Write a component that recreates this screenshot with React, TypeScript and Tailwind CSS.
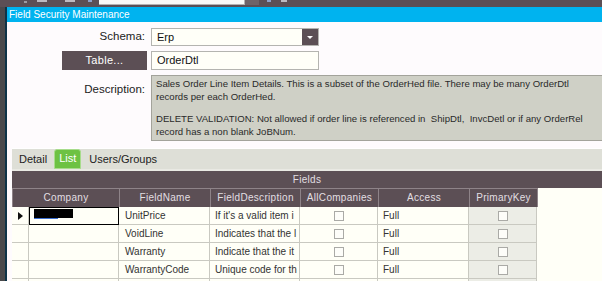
const columns = [
  { name: 'Company', w: 'w-[107px]' },
  { name: 'FieldName', w: 'w-[91px]' },
  { name: 'FieldDescription', w: 'w-[90px]' },
  { name: 'AllCompanies', w: 'w-[78px]' },
  { name: 'Access', w: 'w-[91px]' },
  { name: 'PrimaryKey', w: 'w-[68px]' },
];

// descriptions are clipped by the grid cell in the app
const rows = [
  { field: 'UnitPrice', desc: "If it's a valid item i" },
  { field: 'VoidLine', desc: 'Indicates that the l' },
  { field: 'Warranty', desc: 'Indicate that the it' },
  { field: 'WarrantyCode', desc: 'Unique code for th' },
  { field: '', desc: '' },
];

function Check() {
  return <span className="block w-[10px] h-[10px] border border-[#aaaaa6] bg-[#fdfdf9]" />;
}

function GridRow({ row, first }: { row: (typeof rows)[number]; first: boolean }) {
  return (
    <div className="flex h-[18px] shrink-0">
      <div className="w-[17px] border-r border-b border-[#c9c9c1] flex items-center justify-center">
        {first && (
          <svg width="5" height="8" viewBox="0 0 5 8">
            <path d="M0 0 L5 4 L0 8 Z" fill="#111" />
          </svg>
        )}
      </div>
      <div
        className={
          first
            ? 'w-[90px] border border-black relative'
            : 'w-[90px] border-r border-b border-[#c9c9c1]'
        }
      >
        {first && (
          <>
            <span className="absolute left-[4px] top-[1px] w-[39px] h-[9px] bg-black" />
            <span className="absolute left-[4px] top-[10px] w-[24px] h-[1px] bg-[#3a6fd0]" />
          </>
        )}
      </div>
      <div className="w-[91px] border-r border-b border-[#c9c9c1] pl-[6px] flex items-center overflow-hidden whitespace-nowrap">
        {row.field}
      </div>
      <div className="w-[90px] border-r border-b border-[#c9c9c1] pl-[5px] flex items-center overflow-hidden whitespace-nowrap">
        {row.desc}
      </div>
      <div className="w-[78px] border-r border-b border-[#c9c9c1] flex items-center justify-center">
        {row.field && <Check />}
      </div>
      <div className="w-[91px] border-r border-b border-[#c9c9c1] pl-[5px] flex items-center">
        {row.field && 'Full'}
      </div>
      <div className="w-[68px] border-r border-b border-[#c9c9c1] bg-[#ecede6] flex items-center justify-center">
        {row.field && <Check />}
      </div>
    </div>
  );
}

export default function App() {
  return (
    <div className="w-[602px] h-[281px] overflow-hidden flex flex-col bg-[#5c4f55] font-['Liberation_Sans',Arial,sans-serif]">
      {/* top toolbar remnant */}
      <div className="h-[7px] shrink-0 flex items-start">
        <span className="ml-[24px] mt-[1px] w-[3px] h-[2px] bg-[#9d9aa0]" />
        <span className="ml-[10px] w-[10px] h-[2px] bg-[#bdbac0]" />
        <span className="ml-[18px] w-[10px] h-[2px] bg-[#bdbac0]" />
        <span className="ml-[13px] w-[4px] h-[2px] bg-[#8da0c8]" />
        <span className="ml-[7px] w-[146px] h-[5px] bg-[#fbfaf8] border-b border-r border-[#b5b2b2]" />
        <span className="w-[14px] h-[5px] bg-[#6e6368]" />
        <span className="ml-[8px] w-[4px] h-[2px] bg-[#8da0c8]" />
        <span className="ml-[10px] w-[6px] h-[2px] bg-[#bdbac0]" />
      </div>
      <div className="flex flex-1 min-h-0">
        <div className="w-[5px] shrink-0 bg-[#4a4a4c]" />
        <div className="w-[2px] shrink-0 bg-[#0e3448]" />
        <div className="flex-1 flex flex-col bg-[#fefbfd] min-w-0 overflow-hidden">
          <div className="h-[15px] shrink-0 bg-[#00b3ef] text-white text-[10px] leading-[15px] pl-[2px]">
            Field Security Maintenance
          </div>

          {/* form */}
          <div className="flex items-center mt-[6px] h-[18px]">
            <div className="w-[138px] shrink-0 text-right text-[11.5px] text-[#222]">Schema:</div>
            <div className="ml-[6px] w-[168px] shrink-0 h-[18px] flex border border-[#b4b4b0] bg-[#fffff8]">
              <div className="flex-1 pl-[5px] text-[11px] leading-[16px] text-[#111]">Erp</div>
              <div className="w-[16px] bg-[#5c4f55] flex items-center justify-center">
                <svg width="6" height="3" viewBox="0 0 6 3">
                  <path d="M0 0 H6 L3 3 Z" fill="#fff" />
                </svg>
              </div>
            </div>
          </div>
          <div className="flex items-center mt-[5px] h-[19px]">
            <div className="ml-[55px] w-[85px] shrink-0 h-[19px] bg-[#5c4f55] text-white text-[11px] leading-[19px] text-center tracking-[0.3px]">
              Table...
            </div>
            <div className="ml-[4px] w-[168px] shrink-0 h-[19px] border border-[#b4b4b0] bg-[#fffff8] pl-[5px] text-[11px] leading-[17px] text-[#111]">
              OrderDtl
            </div>
          </div>
          <div className="flex mt-[5px]">
            <div className="w-[138px] shrink-0 text-right text-[11.5px] text-[#222] pt-[6px]">Description:</div>
            <div className="ml-[6px] w-[470px] shrink-0 h-[66px] bg-[#cfd0c6] border border-[#a3a39b] pl-[4px] pt-[2px] text-[9.6px] leading-[12.5px] text-[#2a2a2a] whitespace-nowrap">
              <div>Sales Order Line Item Details. This is a subset of the OrderHed file. There may be many OrderDtl</div>
              <div>records per each OrderHed.</div>
              <div className="mt-[10px]">
                DELETE VALIDATION: Not allowed if order line is referenced in&nbsp; ShipDtl,&nbsp; InvcDetl or if any OrderRel
              </div>
              <div>record has a non blank JoBNum.</div>
            </div>
          </div>

          {/* tabs */}
          <div className="ml-[5px] mt-[7px] h-[21px] shrink-0 bg-[#dedfd7] border-t border-white flex items-end text-[11px] text-[#222]">
            <div className="pl-[7px] pr-[7px] h-[18px] leading-[16px]">Detail</div>
            <div className="h-[20px] px-[4px] bg-[#6dc243] border border-[#a8dc8c] rounded-t-[3px] text-white leading-[16px]">
              List
            </div>
            <div className="pl-[8px] h-[18px] leading-[16px]">Users/Groups</div>
          </div>

          {/* grid */}
          <div className="ml-[5px] flex-1 flex flex-col bg-[#fffff7] border-t-2 border-[#e9e9e3] text-[10px] text-[#333] min-h-0 overflow-hidden">
            <div className="h-[17px] shrink-0 bg-[#5c4f55] text-[#e2dfe2] text-center leading-[17px] tracking-[0.3px]">
              Fields
            </div>
            <div className="flex h-[19px] shrink-0">
              {columns.map((c) => (
                <div
                  key={c.name}
                  className={`${c.w} bg-[#5c4f55] border-l border-t border-[#8e8388] text-[#e2dfe2] text-center leading-[17px] tracking-[0.3px]`}
                >
                  {c.name}
                </div>
              ))}
              <div className="border-l border-[#8e8388]" />
            </div>
            {rows.map((r, i) => (
              <GridRow key={i} row={r} first={i === 0} />
            ))}
          </div>
        </div>
      </div>
    </div>
  );
}
